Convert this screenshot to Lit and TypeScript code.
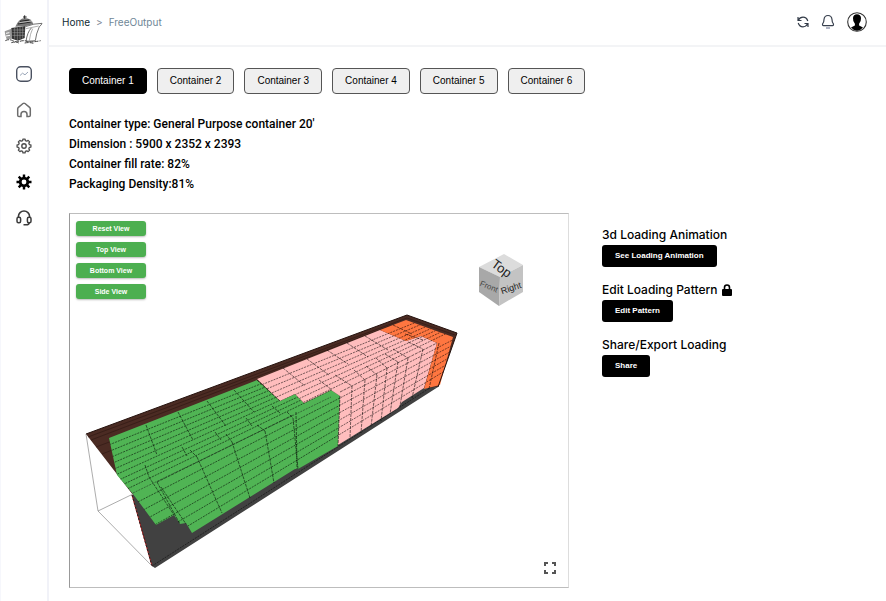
import { LitElement, html, css, svg } from "lit";
import { customElement, state } from "lit/decorators.js";
import { classMap } from "lit/directives/class-map.js";

type Segment = [number, number, number, number];

// Every lengthwise edge of the container runs to this vanishing point.
const VANISH = { x: 748, y: 188 };
const NEAR_X = 90;

function rays(from: number, to: number, rows: number): string {
  const parts: string[] = [];
  for (let i = 1; i < rows; i++) {
    const yAt130 = from + ((to - from) * i) / rows;
    const slope = (VANISH.y - yAt130) / (VANISH.x - 130);
    const y0 = yAt130 + slope * (NEAR_X - 130);
    const y1 = yAt130 + slope * (460 - 130);
    parts.push(`M${NEAR_X} ${y0.toFixed(1)}L460 ${y1.toFixed(1)}`);
  }
  return parts.join("");
}

const path = (list: Segment[]) => list.map(([a, b, c, d]) => `M${a} ${b}L${c} ${d}`).join("");

const GREEN = "109,438 257,380 280,401 295,394 304,403 331,390 340,396 338,446 298,469 295,469 192,533 186,523 180,524 174,515 156,525 133,494 117,475";
const PINK = "257,379 380,330 406,341 421,336 437,343 424,388 402,402 398,408 338,445 340,396 331,390 304,403 295,394 280,401";
const ORANGE = "380,330 406,320 453,337 440,385 424,389 437,343 421,336 406,341";

const TOP_SEAMS: Segment[] = [
  [146, 425, 157, 455], [178, 412, 193, 440], [207, 401, 226, 426], [234, 390, 254, 412],
  [145, 465, 149, 477], [182, 447, 187, 456], [215, 432, 221, 440],
  [246, 418, 252, 426], [272, 406, 280, 413], [226, 434, 232, 442], [190, 450, 197, 457],
  [257, 425, 265, 431], [287, 412, 293, 418],
  [257, 380, 280, 401], [283, 368, 305, 386], [307, 359, 329, 375], [327, 350, 348, 364],
  [347, 343, 368, 357], [365, 336, 388, 350], [319, 380, 332, 390], [335, 375, 352, 386],
  [354, 370, 365, 380], [366, 366, 377, 375], [376, 358, 387, 368], [385, 354, 398, 362],
  [393, 349, 408, 358], [408, 342, 423, 349], [393, 325, 412, 334], [405, 334, 423, 340],
];

const SIDE_SEAMS: Segment[] = [
  [149, 477, 174, 515], [157, 482, 180, 524], [161, 487, 186, 524], [197, 457, 222, 513],
  [232, 442, 250, 498], [265, 431, 274, 483], [293, 418, 298, 469], [296, 412, 297, 469],
  [340, 396, 338, 446], [352, 386, 350, 438], [365, 380, 361, 433],
  [377, 375, 371, 427], [387, 368, 381, 421], [398, 362, 390, 414], [408, 358, 400, 406],
  [423, 349, 412, 398], [439, 343, 429, 389], [157, 482, 293, 415], [340, 392, 437, 343],
];

@customElement("load-viewer")
export class LoadViewer extends LitElement {
  static styles = css`
    :host { display: block; position: relative; box-sizing: border-box; border: 1px solid #bdbdbd; border-left-color: #999; border-right-color: #ddd; background: #fff; }
    .scene { display: block; width: 100%; height: auto; }
    .views { position: absolute; top: 7px; left: 6px; display: grid; gap: 6px; width: 70px; }
    .view { height: 15px; padding: 0; border: 0; border-radius: 3px; background: #4caf50; color: #fff; font: bold 7px/15px "Liberation Sans", Arial, sans-serif; box-shadow: 0 1px 2px #0004; cursor: pointer; }
    .full { position: absolute; right: 10px; bottom: 11px; display: grid; place-items: center; width: 16px; height: 16px; padding: 0; border: 0; background: none; cursor: pointer; }
    .dash { fill: none; stroke: #000; stroke-width: .9; stroke-dasharray: 2 1; opacity: .6; }
    .seam { fill: none; stroke: #000; stroke-width: .9; stroke-dasharray: 3 1; opacity: .6; }
    .wire { fill: none; stroke: #888; stroke-width: .7; }
    .face { font-family: "Liberation Sans", Arial, sans-serif; fill: #222; text-anchor: middle; }
    .top { font-size: 13px; }
    .right { font-size: 9px; }
    .front { font-size: 8px; fill: #444; }
  `;

  render() {
    return html`
      <svg class="scene" viewBox="70 214 498 373" role="img" aria-label="Loaded container">
        <defs>
          <clipPath id="upper"><path d="M109 438L257 380L280 401L295 394L304 403L331 390L340 396L293 418L157 482L133 495L117 475Z" /></clipPath>
          <clipPath id="upper-back"><path d="M257 380L406 320L453 337L437 343L340 392L331 390L304 403L295 394L280 401Z" /></clipPath>
          <clipPath id="lower"><path d="M133 495L157 482L293 418L296 412L340 394L437 343L453 337L440 385L424 388L402 402L398 408L338 446L298 469L192 533L186 523L180 524L174 515L156 525Z" /></clipPath>
        </defs>
        ${svg`
          <polygon points="86,434 407,315 457,333 438,387 424,390 133,495" fill="#4b2b23" />
          <path d="M88 437L407 318L455 335M91 440L390 326M96 447L120 438M102 454L120 447" fill="none" stroke="#2d1813" stroke-width="1" opacity=".6" />
          <polygon points="132,495 152,566 155,568 438,387 424,388 192,480" fill="#414141" />
          <path d="M152 566L436 384" stroke="#222" stroke-width="1" stroke-dasharray="2 1" />
          <path d="M132 495L152 566" stroke="#a01818" stroke-width="1" />
          <path d="M132 495L152 566" stroke="#222" stroke-width="1" stroke-dasharray="2 2" />
          <path class="wire" d="M86 434L98 511L152 566M98 511L133 494" />
          <polygon points=${GREEN} fill="#50b454" />
          <polygon points=${PINK} fill="#ffbdbd" />
          <polygon points=${ORANGE} fill="#ff7640" />
          <g clip-path="url(#upper)"><path class="dash" d=${rays(430, 494, 10)} /></g>
          <g clip-path="url(#upper-back)"><path class="dash" d=${rays(430, 494, 8)} /></g>
          <g clip-path="url(#lower)"><path class="dash" d=${rays(495, 572, 7)} /></g>
          <path class="seam" d=${path(TOP_SEAMS)} />
          <path class="seam" d=${path(SIDE_SEAMS)} />
          <path d="M133 493L331 397" fill="none" stroke="#243a26" stroke-width="1" stroke-dasharray="2 1" opacity=".6" />
          <path d="M86 434L407 315L457 333L438 387" fill="none" stroke="#24110d" stroke-width="1" />

          <polygon points="504,254 523,265 500,277 479,267" fill="#dcdcdc" />
          <polygon points="479,267 500,277 499,306 479,292" fill="#a8a8a8" />
          <polygon points="523,265 523,292 499,306 500,277" fill="#c3c3c3" />
          <text class="face top" transform="translate(499 272) rotate(36)">Top</text>
          <text class="face front" transform="translate(488 289) rotate(22)">Front</text>
          <text class="face right" transform="translate(512 291) rotate(-18)">Right</text>
        `}
      </svg>
      <div class="views">
        ${["Reset View", "Top View", "Bottom View", "Side View"].map((t) => html`<button class="view" type="button">${t}</button>`)}
      </div>
      <button class="full" type="button" aria-label="Full screen">
        <svg width="12" height="12" viewBox="0 0 12 12" fill="none" stroke="#555" stroke-width="2"><path d="M1 4V1H4M8 1H11V4M11 8V11H8M4 11H1V8" /></svg>
      </button>
    `;
  }
}

const gearTeeth = (inner: number, outer: number) => {
  const pts: string[] = [];
  for (let i = 0; i < 8; i++) {
    for (const [off, r] of [[-14, inner], [-9, outer], [9, outer], [14, inner]]) {
      const a = ((i * 45 + off) * Math.PI) / 180;
      pts.push(`${(8 + r * Math.cos(a)).toFixed(2)} ${(8 + r * Math.sin(a)).toFixed(2)}`);
    }
  }
  return `M${pts.join("L")}Z`;
};

const NAV = [
  { label: "Dashboard", icon: svg`<rect x=".7" y=".7" width="14.6" height="14.6" rx="4" fill="#fff" stroke="#4a5160" stroke-width="1.4"/><path d="M4 9.5L6.5 7.2L9 8.8L12 6" fill="none" stroke="#9aa6b8" stroke-width="1"/>` },
  { label: "Home", icon: svg`<path d="M1.7 6.8Q1.7 6 2.4 5.4L7 1.5Q8 .8 9 1.5L13.6 5.4Q14.3 6 14.3 6.8V13.2Q14.3 14.6 13 14.6H11V12.3Q11 9.5 8 9.5T5 12.3V14.6H3Q1.7 14.6 1.7 13.2Z" fill="none" stroke="#6c6c6c" stroke-width="1.5"/>` },
  { label: "Settings", icon: svg`<path d=${gearTeeth(5.6, 7)} fill="none" stroke="#4d4d4d" stroke-width="1.3" stroke-linejoin="round"/><circle cx="8" cy="8" r="2.2" fill="none" stroke="#4d4d4d" stroke-width="1.4"/>` },
  { label: "Output", icon: svg`<path d=${gearTeeth(5.2, 7.6)} fill="#000"/><circle cx="8" cy="8" r="2.4" fill="#fff"/>` },
  { label: "Support", icon: svg`<path d="M2.4 8V6.6A5.6 5.6 0 0 1 13.6 6.6V8" fill="none" stroke="#3b3b3b" stroke-width="1.6"/><rect x="1" y="7.3" width="3.6" height="5.4" rx="1.5" fill="#fff" stroke="#3b3b3b" stroke-width="1.5"/><rect x="11.4" y="7.3" width="3.6" height="5.4" rx="1.5" fill="#fff" stroke="#3b3b3b" stroke-width="1.5"/><path d="M13.2 12.8Q12.8 14.8 10.3 14.8H7.5" fill="none" stroke="#3b3b3b" stroke-width="1.6"/>` },
];

@customElement("app-root")
export class AppRoot extends LitElement {
  @state() private active = 1;

  static styles = css`
    :host { display: grid; grid-template-columns: 48px 1fr; min-height: 100vh; background: #fff; color: #000; font-family: Inter, "Liberation Sans", sans-serif; }
    .rail { display: flex; flex-direction: column; align-items: center; padding-top: 14px; border-right: 2px solid #f1f2f8; border-left: 1px solid #f6f7fc; box-sizing: border-box; width: 49px; }
    .logo { display: block; }
    .nav { display: grid; gap: 20px; margin-top: 20px; }
    .nav a, .nav svg { display: block; width: 16px; height: 16px; }
    .page { min-width: 0; }
    .bar { display: flex; align-items: center; justify-content: space-between; height: 47px; box-sizing: border-box; border-bottom: 2px solid #f3f4f6; padding: 0 19px 2px 14px; }
    .crumbs { display: flex; gap: 6px; font-size: 10px; line-height: 16px; color: #7b8794; }
    .crumbs a { color: #0f2a33; text-decoration: none; }
    .crumbs .here { color: #6f8797; }
    .tools { display: flex; align-items: center; gap: 12px; }
    .tool { display: block; padding: 0; border: 0; background: none; cursor: pointer; }
    .tool svg { display: block; }
    .content { padding: 21px 20px 13px 21px; }
    .tabs { display: flex; flex-wrap: wrap; gap: 10px; }
    .tab { height: 26px; padding: 0 12px; border: 1px solid #555; border-radius: 4px; background: #efefef; color: #000; font: 10px/24px "Liberation Sans", Arial, sans-serif; cursor: pointer; }
    .tab.on { background: #000; border-color: #000; color: #fff; }
    .facts { margin: 20px 0 19px; font-family: Roboto, "Liberation Sans", sans-serif; font-size: 12px; font-weight: 500; line-height: 20px; }
    .facts p { margin: 0; }
    .work { display: flex; gap: 33px; align-items: flex-start; }
    load-viewer { flex: 0 1 500px; min-width: 0; }
    .side { display: grid; gap: 13px; padding-top: 12px; }
    h2 { display: flex; align-items: center; gap: 5px; margin: 0; font-size: 12px; font-weight: 500; line-height: 20px; }
    .act { display: block; height: 22px; padding: 0 13px; border: 0; border-radius: 3px; background: #000; color: #fff; font: bold 8px/22px "Liberation Sans", Arial, sans-serif; cursor: pointer; }
  `;

  private logo() {
    return html`<svg class="logo" width="40" height="32" viewBox="0 0 120 96" role="img" aria-label="Ship">
      <path d="M2 52L22 44L24 74L8 76Q3 64 2 52Z" fill="#999" />
      <path d="M22 42L64 36L62 72L42 80L24 74Z" fill="#333" />
      <path d="M34 38Q44 14 62 12Q82 12 88 30L66 36Z" fill="#777" />
      <path d="M26 48H62M25 56H62M25 64H62M32 42V74M40 40V78M48 38V76M56 38V74" stroke="#aaa" stroke-width="1.5" />
      <path d="M42 30L80 24M48 22L76 18M62 4V14M57 9H68" stroke="#222" stroke-width="3" fill="none" />
      <path d="M46 26L84 21" stroke="#ddd" stroke-width="2" />
      <path d="M64 38Q90 28 114 28Q112 34 106 38Q96 60 94 80L66 82Q70 54 82 42" fill="#fff" stroke="#555" stroke-width="2.5" />
      <path d="M66 44L104 36M86 44Q78 60 76 80" stroke="#888" stroke-width="2" fill="none" />
      <path d="M6 58L16 56M6 66L18 64" stroke="#fff" stroke-width="3" />
      <path d="M4 80Q14 74 26 80T48 82T70 82T110 80M22 86Q34 82 44 87M62 87Q76 84 88 88" fill="none" stroke="#444" stroke-width="3" stroke-dasharray="12 3" />
    </svg>`;
  }

  render() {
    return html`
      <aside class="rail">
        ${this.logo()}
        <nav class="nav">
          ${NAV.map((n) => html`<a href="#" aria-label=${n.label}><svg viewBox="0 0 16 16">${n.icon}</svg></a>`)}
        </nav>
      </aside>
      <div class="page">
        <header class="bar">
          <nav class="crumbs"><a href="#">Home</a><span>&gt;</span><span class="here">FreeOutput</span></nav>
          <div class="tools">
            <button class="tool" type="button" aria-label="Refresh">
              <svg width="12" height="14" viewBox="0 0 12 14" fill="none" stroke="#333b48" stroke-width="1.2"><path d="M1 2V5.5H4.5M1.3 5.2Q3 2.2 6 2.2Q9.5 2.2 10.8 6M11 12V8.5H7.5M10.7 8.8Q9 11.8 6 11.8Q2.5 11.8 1.2 8" /></svg>
            </button>
            <button class="tool" type="button" aria-label="Notifications">
              <svg width="14" height="16" viewBox="0 0 14 16" fill="none" stroke="#38404e" stroke-width="1.2"><path d="M3 5.5Q3.4 1.5 7 1.5T11 5.5Q11 8 12.3 9.6Q13 11.4 11.4 11.7H2.6Q1 11.4 1.7 9.6Q3 8 3 5.5Z" /><path d="M5 14H9" stroke="#9da3b5" stroke-width="1.6" /></svg>
            </button>
            <button class="tool" type="button" aria-label="Account">
              <svg width="20" height="20" viewBox="0 0 20 20"><circle cx="10" cy="10" r="9.3" fill="#fff" stroke="#333" stroke-width="1.1" /><path d="M6 6Q6.4 2.3 10 2.3T14 6Q14.2 9.8 12.1 11.8V13.6L16 15.6Q13.5 18.8 10 18.8T4 15.6L7.9 13.6V11.8Q5.8 9.8 6 6Z" fill="#000" /></svg>
            </button>
          </div>
        </header>
        <main class="content">
          <div class="tabs">
            ${[1, 2, 3, 4, 5, 6].map((n) => html`<button type="button" class=${classMap({ tab: true, on: n === this.active })} @click=${() => (this.active = n)}>Container ${n}</button>`)}
          </div>
          <section class="facts">
            <p>Container type: General Purpose container 20'</p>
            <p>Dimension : 5900 x 2352 x 2393</p>
            <p>Container fill rate: 82%</p>
            <p>Packaging Density:81%</p>
          </section>
          <div class="work">
            <load-viewer></load-viewer>
            <div class="side">
              <section><h2>3d Loading Animation</h2><button class="act" type="button">See Loading Animation</button></section>
              <section>
                <h2>Edit Loading Pattern
                  <svg width="10" height="12" viewBox="0 0 10 12"><rect y="5" width="10" height="7" rx="1" /><path d="M2.5 6V3.5Q2.5 1 5 1T7.5 3.5V6" fill="none" stroke="#000" stroke-width="1.6" /></svg>
                </h2>
                <button class="act" type="button">Edit Pattern</button>
              </section>
              <section><h2>Share/Export Loading</h2><button class="act" type="button">Share</button></section>
            </div>
          </div>
        </main>
      </div>
    `;
  }
}
